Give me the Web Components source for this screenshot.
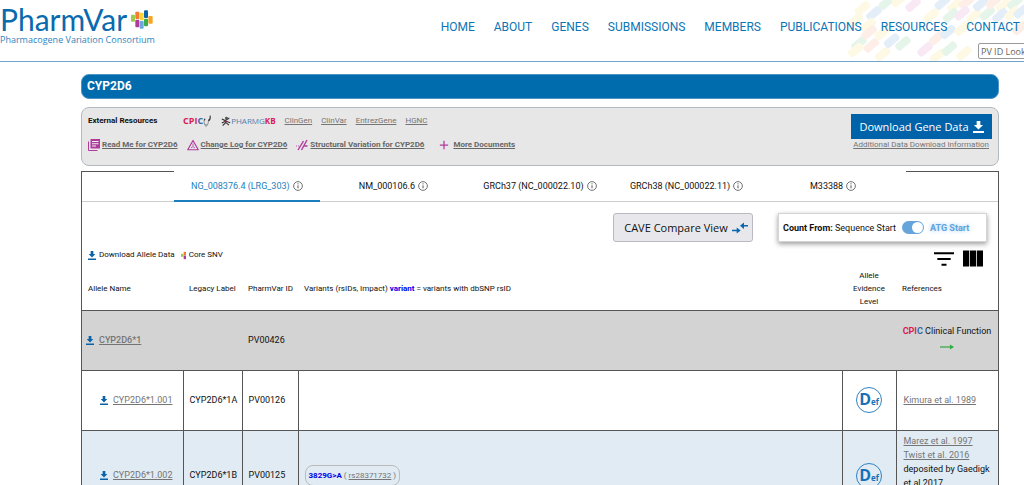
<!DOCTYPE html>
<html lang="en">
<head>
<meta charset="utf-8">
<title>PharmVar - CYP2D6</title>
<style>
  html { background: #fff; }
  body { margin: 0; font-family: Roboto, "Liberation Sans", sans-serif; font-size: 8px; line-height: 12px; color: #111; overflow-x: hidden; }
</style>
</head>
<body>
<pv-header></pv-header>
<pv-page>
  <pv-title slot="title">CYP2D6</pv-title>
  <pv-resources slot="resources"></pv-resources>
  <pv-sheet slot="sheet">
    <pv-tabs slot="tabs">
      <pv-tab active>NG_008376.4 (LRG_303)</pv-tab>
      <pv-tab>NM_000106.6</pv-tab>
      <pv-tab>GRCh37 (NC_000022.10)</pv-tab>
      <pv-tab>GRCh38 (NC_000022.11)</pv-tab>
      <pv-tab>M33388</pv-tab>
    </pv-tabs>
    <pv-toolbar></pv-toolbar>
    <pv-alleles></pv-alleles>
  </pv-sheet>
</pv-page>
<script>
const define = (name, css, html) => customElements.define(name, class extends HTMLElement {
  constructor() {
    super();
    const t = document.createElement('template');
    t.innerHTML = `<style>*,:host{box-sizing:border-box}:host{display:block}a{color:#757575}button{font:inherit;color:inherit;cursor:pointer;white-space:nowrap}${css}</style>${html}`;
    this.attachShadow({ mode: 'open' }).append(t.content.cloneNode(true));
  }
});

const icons = {
  download: '<path fill="currentColor" d="M22 8h-6V0H8v8H2l10 9zM0 20v4h24v-4z"/>',
  info: '<g fill="none" stroke="#555" stroke-width="2"><circle cx="12" cy="12" r="10.500"/><path stroke-width="2.400" d="M12 10.500v7"/></g><circle cx="12" cy="6.800" r="1.500" fill="#555"/>',
  books: '<path fill="none" stroke="#b03a9c" stroke-width="2" d="M1 5v18h18"/><path fill="#b03a9c" d="M5 0h19v19H5z"/><path stroke="#eee" stroke-width="2" d="M8 5h13M8 9.500h13M8 14h8"/>',
  triangle: '<path fill="none" stroke="#b03a9c" stroke-width="2.400" stroke-linejoin="round" d="M12 3L22.500 21.500h-21z"/><path fill="none" stroke="#b03a9c" stroke-width="1.600" d="M12 9v5M8 18l4-3 4 3"/>',
  slashes: '<path fill="none" stroke="#b03a9c" stroke-width="2.800" d="M4 22L15 4M11 22L22 2M17 14h6"/><path stroke="#b03a9c" stroke-width="1.600" stroke-dasharray="2 2" d="M0 14h9"/>',
  plus: '<path stroke="#b03a9c" stroke-width="3" d="M12 2v20M2 12h20"/>',
  compare: '<path fill="#0a66ad" d="M0 15.500h7V11l6 6-6 6v-4.500H0zM24 6h-6V1l-6 6.500 6 6.500V9h6z"/>',
  filter: '<path fill="#000" d="M0 2h24v3H0zM4 10.500h16v3H4zM9 19h6v3H9z"/>',
  columns: '<path fill="#000" d="M0 2h7.400v20H0zM8.300 2h7.400v20H8.300zM16.600 2H24v20h-7.400z"/>',
  arrow: '<path fill="none" stroke="#35ab45" stroke-width="5" d="M0 12h22"/><path fill="#35ab45" d="M17 2l7 10-7 10z"/>',
  snv: '<path fill="#9bcb4a" d="M3 7h7v9H3z"/><path fill="#f47b30" d="M11 1h7v10h-7z"/><path fill="#b03a9c" d="M11 12h7v11h-7z"/>',
  steth: '<path fill="none" stroke="#8a8f96" stroke-width="2.500" d="M3 9c-1 6 1 9 5 10 5 0 7-4 6-9M8 19v3"/><path fill="none" stroke="#333" stroke-width="3" d="M14 10c4 0 6-4 5-9M3 9l3-1"/>',
  figure: '<path fill="none" stroke="#333" stroke-width="2.600" d="M2 7l8 4 10-6M11 10v6l-7 7M12 16l7 6M2 17l9-5 11 4"/><circle cx="13" cy="5" r="3.500" fill="#555"/><circle cx="11" cy="13" r="2.500" fill="#c2185b"/>'
};
customElements.define('pv-icon', class extends HTMLElement {
  constructor() { super(); this.attachShadow({ mode: 'open' }); }
  connectedCallback() {
    this.shadowRoot.innerHTML = `<style>:host{display:inline-block;width:12px;height:12px;flex:none}svg{display:block;width:100%;height:100%}</style><svg viewBox="0 0 24 24" preserveAspectRatio="${this.hasAttribute('stretch') ? 'none' : 'xMidYMid'}" aria-hidden="true">${icons[this.getAttribute('name')]}</svg>`;
  }
});

const pale = { g: '#e6f5ea', b: '#e3eef8', y: '#fef9e4', o: '#fdeee8', p: '#f8e9f5' };
const pills = [
  [487,8,'g'],[450,40,'b'],[415,25,'y'],[395,60,'y'],[433,75,'y'],[525,0,'y'],[567,14,'p'],[405,130,'g'],[435,97,'o'],[442,136,'o'],[475,98,'y'],
  [476,162,'y'],[503,122,'b'],[537,130,'g'],[395,150,'y'],[655,8,'b'],[692,16,'y'],[728,6,'o'],[622,46,'y'],[680,46,'g'],[714,40,'p'],
  [750,48,'y'],[770,12,'b'],[790,40,'g'],[808,6,'o'],[838,16,'y'],[873,8,'g'],[828,46,'b'],[864,40,'y'],
  [892,34,'b'],[638,114,'o'],[603,148,'p'],[640,168,'y'],[672,96,'b'],[714,86,'y'],[676,146,'g'],[720,160,'y'],[888,84,'o']
].map(([x, y, c]) => `<rect x="-25" y="-12" width="50" height="24" rx="9" fill="${pale[c]}" transform="translate(${x} ${y}) rotate(-40)"/>`).join('');

define('pv-header', `
  :host{position:relative;overflow:hidden;border-bottom:1px solid #6fa5cc;height:62px}
  .deco{position:absolute;right:0;top:0;width:300px;height:61px}
  .bar{position:relative;display:flex;justify-content:space-between;height:100%}
  .logo{display:block;text-decoration:none;color:#0a6aae;font-family:Lato,sans-serif;padding-top:3px}
  .mark{display:flex;align-items:center;gap:4px;font-size:30px;line-height:32px}
  .mark svg{width:22px;height:19px}
  .sub{display:block;font:9px/10px "Open Sans",sans-serif;color:#2f83bd}
  .right{display:flex;flex-direction:column;gap:6px;padding-top:17px}
  nav{display:flex;gap:19px;padding-right:4px;font-size:12px;line-height:20px}
  nav a{color:#0c75b5;text-decoration:none}
  input{align-self:flex-end;margin-right:-54px;width:100px;height:16px;border:1px solid #999;border-radius:2px;background:#fff;padding:0 2px;font:9px "Open Sans",sans-serif;color:#666}
  input::placeholder{color:#666;opacity:1}
`, `<svg class="deco" viewBox="0 0 900 183" aria-hidden="true">${pills}</svg>
<div class="bar">
  <a class="logo" href="#home"><span class="mark"><span>PharmVar</span>
    <svg viewBox="0 0 66 57" aria-hidden="true"><g><rect y="14" width="12" height="21" rx="3" fill="#9bcb4a"/><rect x="13" y="5" width="12" height="22" rx="3" fill="#f47b30"/><rect x="13" y="29" width="12" height="23" rx="3" fill="#b03a9c"/><rect x="26" y="8" width="12" height="23" rx="3" fill="#fdd13a"/><rect x="26" y="33" width="12" height="23" rx="3" fill="#6da8dd"/><rect x="39" y="1" width="12" height="23" rx="3" fill="#0a62a8"/><rect x="39" y="26" width="12" height="23" rx="3" fill="#3cae49"/><rect x="52" y="18" width="13" height="23" rx="3" fill="#f6a623"/></g></svg></span>
    <span class="sub">Pharmacogene Variation Consortium</span></a>
  <div class="right">
    <nav>${['HOME','ABOUT','GENES','SUBMISSIONS','MEMBERS','PUBLICATIONS','RESOURCES','CONTACT'].map(t => `<a href="#${t.toLowerCase()}">${t}</a>`).join('')}</nav>
    <input type="text" aria-label="PV ID Lookup" placeholder="PV ID Lookup">
  </div>
</div>`);

define('pv-page', `
  :host{display:flex;flex-direction:column;padding:12px 25px 0 81px}
  ::slotted([slot=resources]){margin-top:8px}
  ::slotted([slot=sheet]){margin-top:5px}
`, `<slot name="title"></slot><slot name="resources"></slot><slot name="sheet"></slot>`);

define('pv-title', `
  h1{margin:0;padding:0 5px;border-radius:8px;background:#006bad;border:1px solid #4d94c4;color:#fff;font-size:12px;line-height:23px;font-weight:700}
`, `<h1><slot></slot></h1>`);

define('pv-resources', `
  :host{display:flex;justify-content:space-between;height:59px;border:1px solid #b3b9c0;border-radius:8px;background:#e7e7e7;padding:6px 6px 0 6px}
  .row{display:flex;align-items:center;height:14px}
  .ext{gap:9px}
  .ext b{width:86px}
  .docs{margin-top:10px;gap:9px;font-weight:700}
  .doc{display:flex;align-items:center;gap:2px}
  .doc a{color:#666}
  .doc.more{margin-left:6px;gap:4px}
  .more pv-icon{width:10px;height:10px}
  .brand{display:flex;align-items:center;text-decoration:none;font-family:"Open Sans",sans-serif}
  .cpic pv-icon{height:13px;width:9px}
  .cpic{font-weight:700;font-size:9px;color:#d81b55}
  .cpic i{font-style:normal;color:#2d6da8}
  .kb{color:#4f7fb0}
  .kb pv-icon{width:10px;height:12px}
  .kb b{width:auto;color:#d81b55}
  .get{display:flex;flex-direction:column;align-items:flex-end}
  button{display:flex;align-items:center;justify-content:center;gap:4px;width:141px;height:25px;padding:0;border:0;background:#0062a8;color:#fff;font:11px "Open Sans",sans-serif}
  button pv-icon{width:11px;height:12px}
  .get a{margin-right:3px}
`, `<div>
  <div class="row ext"><b>External Resources</b>
    <a class="brand cpic" href="#cpic"><span>CPI<i>C</i></span><pv-icon name="steth" stretch></pv-icon></a>
    <a class="brand kb" href="#pharmgkb"><pv-icon name="figure"></pv-icon><span>PHARMG<b>KB</b></span></a>
    <a href="#clingen">ClinGen</a><a href="#clinvar">ClinVar</a><a href="#entrez">EntrezGene</a><a href="#hgnc">HGNC</a></div>
  <div class="row docs">
    <span class="doc"><pv-icon name="books"></pv-icon><a href="#readme">Read Me for CYP2D6</a></span>
    <span class="doc"><pv-icon name="triangle"></pv-icon><a href="#log">Change Log for CYP2D6</a></span>
    <span class="doc"><pv-icon name="slashes"></pv-icon><a href="#sv">Structural Variation for CYP2D6</a></span>
    <span class="doc more"><pv-icon name="plus"></pv-icon><a href="#more">More Documents</a></span></div>
</div>
<div class="get"><button type="button">Download Gene Data<pv-icon name="download" stretch></pv-icon></button><a href="#info">Additional Data Download Information</a></div>`);

define('pv-sheet', `:host{border:solid #555;border-width:0 1px}`, `<slot name="tabs"></slot><slot></slot>`);

define('pv-tabs', `
  :host{display:grid;grid-template-columns:1fr 8fr 1fr;height:31px;border-bottom:1px solid #ccc}
  .edge{border-top:1px solid #555}
  .list{display:grid;grid-template-columns:repeat(5,1fr)}
`, `<div class="edge"></div><div class="list" role="tablist"><slot></slot></div><div class="edge"></div>`);

define('pv-tab', `
  :host{height:31px}
  button{display:flex;align-items:center;justify-content:center;gap:3px;width:100%;height:100%;padding:0;border:0;border-bottom:2px solid transparent;background:none;font-size:9px}
  :host([active]) button{color:#1c7fbd;border-color:#1c7fbd}
  pv-icon{width:10px;height:10px}
`, `<button type="button" role="tab"><slot></slot><pv-icon name="info"></pv-icon></button>`);

define('pv-toolbar', `
  :host{padding:11px 11px 0 6px}
  .top{display:flex;justify-content:flex-end;gap:25px;height:29px}
  .cave{display:flex;align-items:center;justify-content:center;gap:4px;width:140px;border:1px solid #b9b9bf;border-radius:3px;background:#e8e8ec;padding:0 0 0 6px;font:11px "Open Sans",sans-serif}
  .cave pv-icon{width:16px;height:12px}
  .count{display:flex;align-items:center;width:209px;border:1px solid #d5d5d5;padding-left:4px;font-size:9px;background:#fff;box-shadow:0 2px 5px #0006}
  label{display:flex;align-items:center;gap:6px;white-space:nowrap}
  input{appearance:none;margin:0;width:22px;height:13px;border-radius:7px;background:#65a5dc;display:flex;align-items:center;justify-content:flex-end;padding:1px}
  input::after{content:"";width:11px;height:11px;border-radius:50%;background:#fff}
  strong{color:#5fa3dd;text-shadow:0 0 4px #9cc8ee}
  .legend{display:flex;justify-content:space-between;height:24px;margin-top:1px;align-items:center}
  .keys,.tools,.key{display:flex;align-items:center}
  .keys{gap:5px}.key{gap:3px}
  .key + .key{gap:1px}
  .key pv-icon{width:8px;height:9px;color:#0a62a8}
  .tools{gap:9px;padding:7px 4px 0 0}
  .tools button{border:0;background:none;padding:0;display:flex;align-items:center}
  .tools pv-icon{width:20px;height:19px}
  .tools .f{height:16px}
`, `<div class="top">
  <button class="cave" type="button">CAVE Compare View<pv-icon name="compare" stretch></pv-icon></button>
  <div class="count"><label><span><b>Count From:</b> Sequence Start</span><input type="checkbox" role="switch" checked><strong>ATG Start</strong></label></div>
</div>
<div class="legend"><div class="keys"><span class="key"><pv-icon name="download" stretch></pv-icon>Download Allele Data</span><span class="key"><pv-icon name="snv"></pv-icon>Core SNV</span></div>
<div class="tools"><button type="button" aria-label="Filter"><pv-icon class="f" name="filter" stretch></pv-icon></button><button type="button" aria-label="Columns"><pv-icon name="columns" stretch></pv-icon></button></div></div>`);

define('pv-def', `
  :host{display:inline-block;vertical-align:middle}
  span{display:flex;align-items:baseline;justify-content:center;width:26px;height:26px;border:1px solid #2f83c4;border-radius:50%;color:#1670b8;font:700 16px/23px "Open Sans",sans-serif}
  sub{font-size:8px;line-height:8px;vertical-align:baseline}
`, `<span>D<sub>ef</sub></span>`);

define('pv-alleles', `
  table{width:100%;border-collapse:collapse;table-layout:fixed}
  th,td{font-weight:400;text-align:left;padding:0 6px;line-height:13px;white-space:nowrap}
  th{height:43px}
  td{font-size:9px}
  .c{text-align:center}
  th.c{white-space:normal}
  tbody tr{border-top:1px solid #555}
  td{border:1px solid #555;border-width:0 1px}
  td:first-child{border-left:0;padding-left:18px}
  td:last-child{border-right:0;padding-left:7px}
  .core td{height:60px;background:#d3d3d3;border-left:0;border-right:0}
  .core td:first-child{padding-left:4px}
  .a td{height:60px}
  .b td{height:91px;background:#e0ebf3}
  .b td:last-child{vertical-align:top;padding-top:3px;line-height:14px;white-space:normal}
  .name{display:flex;align-items:center;gap:5px}
  .name pv-icon{width:8px;height:9px;color:#0a62a8}
  .core a{font-weight:500}
  .snv{display:inline-block;border:1px solid #bbb;border-radius:8px;padding:3px;color:#757575;font-size:8px}
  .v{color:#00e}
  .fn{display:flex;flex-direction:column;align-items:center;gap:6px}
  .red{color:#d81b55}.blue{color:#2d6da8}
  .fn pv-icon{width:14px;height:6px}
  .core td:last-child{padding:0 0 6px}
`, `<table>
<colgroup><col style="width:101px"><col style="width:59px"><col style="width:56px"><col><col style="width:54px"><col style="width:102px"></colgroup>
<thead><tr><th>Allele Name</th><th>Legacy Label</th><th>PharmVar ID</th><th>Variants (rsIDs, Impact) <b class="v">variant</b> = variants with dbSNP rsID</th><th class="c">Allele<br>Evidence<br>Level</th><th>References</th></tr></thead>
<tbody>
<tr class="core"><td><span class="name"><pv-icon name="download" stretch></pv-icon><a href="#1">CYP2D6*1</a></span></td><td></td><td>PV00426</td><td></td><td></td><td><div class="fn"><span><b class="red">CPI</b><b class="blue">C</b> Clinical Function</span><pv-icon name="arrow" stretch></pv-icon></div></td></tr>
<tr class="a"><td><span class="name"><pv-icon name="download" stretch></pv-icon><a href="#1.001">CYP2D6*1.001</a></span></td><td>CYP2D6*1A</td><td>PV00126</td><td></td><td class="c"><pv-def></pv-def></td><td><a href="#kimura">Kimura et al. 1989</a></td></tr>
<tr class="b"><td><span class="name"><pv-icon name="download" stretch></pv-icon><a href="#1.002">CYP2D6*1.002</a></span></td><td>CYP2D6*1B</td><td>PV00125</td><td><span class="snv"><b class="v">3829G&gt;A</b> ( <a href="#rs28371732">rs28371732</a> )</span></td><td class="c"><pv-def></pv-def></td><td><a href="#marez">Marez et al. 1997</a><br><a href="#twist">Twist et al. 2016</a><br>deposited by Gaedigk et al 2017</td></tr>
</tbody></table>`);
</script>
</body>
</html>
